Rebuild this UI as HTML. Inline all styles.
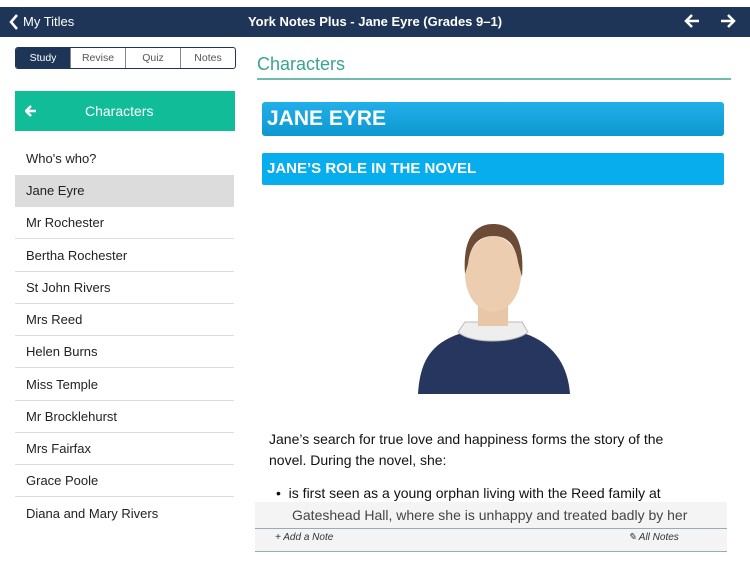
<!DOCTYPE html>
<html><head><meta charset="utf-8"><style>
*{margin:0;padding:0;box-sizing:border-box}
body{width:750px;height:562px;overflow:hidden;background:#fff;font-family:"Liberation Sans",sans-serif;position:relative}
.top{position:absolute;top:7px;left:0;width:750px;height:30px;background:#1f3557;color:#fff}
.abs{position:absolute}
.seg{position:absolute;top:47px;left:15px;width:221px;height:22px;border:1px solid #1f3557;border-radius:3px;display:flex;font-size:10.5px;color:#555;overflow:hidden}
.seg div{flex:1;text-align:center;line-height:20px;border-left:1px solid #888}
.seg div:first-child{background:#1f3557;color:#fff;border:none}
.li{position:absolute;left:15px;width:219px;height:32px;border-bottom:1px solid #ddd;font-size:13px;color:#222;padding-left:11px;line-height:32px}
</style></head><body>
<div class="top">
<svg class="abs" style="left:9px;top:7px" width="10" height="16"><path d="M8 1 L2 8 L8 15" stroke="#fff" stroke-width="2.5" fill="none"/></svg>
<div class="abs" style="left:23px;top:7px;font-size:13px">My Titles</div>
<div class="abs" style="left:0;width:750px;text-align:center;top:7px;font-size:13px;font-weight:bold">York Notes Plus - Jane Eyre (Grades 9–1)</div>
<svg class="abs" style="left:684px;top:7px" width="16" height="14"><path d="M15 7H2M8 1L2 7L8 13" stroke="#fff" stroke-width="2.5" fill="none"/></svg>
<svg class="abs" style="left:720px;top:7px" width="16" height="14"><path d="M1 7H14M8 1L14 7L8 13" stroke="#fff" stroke-width="2.5" fill="none"/></svg>
</div>
<div class="seg"><div>Study</div><div>Revise</div><div>Quiz</div><div>Notes</div></div>
<div class="abs" style="left:15px;top:91px;width:220px;height:40px;background:#11bd98;color:#fff;font-size:14px;line-height:40px">
<svg class="abs" style="left:10px;top:14px" width="12" height="12"><path d="M11 6H2M6 1L1 6L6 11" stroke="#fff" stroke-width="2.5" fill="none"/></svg>
<span style="position:absolute;left:70px">Characters</span></div>
<div class="li" style="top:143px;border:none">Who's who?</div>
<div class="li" style="top:175px;background:#dcdcdc">Jane Eyre</div>
<div class="li" style="top:207px">Mr Rochester</div>
<div class="li" style="top:240px">Bertha Rochester</div>
<div class="li" style="top:272px">St John Rivers</div>
<div class="li" style="top:304px">Mrs Reed</div>
<div class="li" style="top:336px">Helen Burns</div>
<div class="li" style="top:369px">Miss Temple</div>
<div class="li" style="top:401px">Mr Brocklehurst</div>
<div class="li" style="top:433px">Mrs Fairfax</div>
<div class="li" style="top:465px">Grace Poole</div>
<div class="li" style="top:498px;border:none">Diana and Mary Rivers</div>
<div class="abs" style="left:257px;top:54px;font-size:18px;color:#3aa391">Characters</div>
<div class="abs" style="left:257px;top:78px;width:474px;height:2px;background:#6dbcae"></div>
<div class="abs" style="left:262px;top:102px;width:462px;height:34px;border-radius:3px;background:linear-gradient(#22b0ea,#0d97cf);color:#fff;font-weight:bold;font-size:21px;padding-left:5px;line-height:34px">JANE EYRE</div>
<div class="abs" style="left:262px;top:153px;width:462px;height:32px;border-radius:2px;background:#08adee;color:#fff;font-weight:bold;font-size:15px;padding-left:5px;line-height:32px">JANE’S ROLE IN THE NOVEL</div>
<svg class="abs" style="left:410px;top:222px" width="166" height="173">
<path d="M8 172 C10 140 20 120 55 110 L110 110 C145 120 158 145 160 172Z" fill="#27365f"/>
<path d="M48 110 C60 122 105 122 118 110 L112 100 L55 100Z" fill="#eee" stroke="#bbb"/>
<path d="M68 80 L68 104 L98 104 L98 80Z" fill="#e8c6a8"/>
<ellipse cx="83" cy="52" rx="28" ry="38" fill="#eccdb0"/>
<path d="M55 52 C52 10 70 2 83 2 C100 2 115 12 112 55 L108 40 C105 20 95 14 83 14 C70 14 60 22 58 42Z" fill="#6b4a36"/>
</svg>
<div class="abs" style="left:269px;top:429px;width:430px;font-size:14px;line-height:21px;color:#111">Jane’s search for true love and happiness forms the story of the novel. During the novel, she:</div>
<div class="abs" style="left:276px;top:485px;font-size:14px;color:#111">•&nbsp; is first seen as a young orphan living with the Reed family at</div>
<div class="abs" style="left:255px;top:502px;width:472px;height:50px;background:#f4f4f4;border-bottom:1px solid #9ab"></div>
<div class="abs" style="left:292px;top:507px;font-size:14px;color:#444">Gateshead Hall, where she is unhappy and treated badly by her</div>
<div class="abs" style="left:255px;top:528px;width:472px;height:1px;background:#9ab"></div>
<div class="abs" style="left:275px;top:532px;font-size:10px;font-style:italic;color:#333">+ Add a Note</div>
<div class="abs" style="left:628px;top:532px;font-size:10px;font-style:italic;color:#333">✎ All Notes</div>
</body></html>
